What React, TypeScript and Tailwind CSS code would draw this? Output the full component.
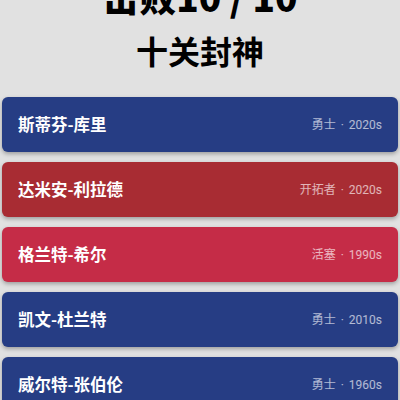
import React from "react";

const players = [
  { name: "斯蒂芬-库里", team: "勇士", era: "2020s", bg: "bg-[#263d84]" },
  { name: "达米安-利拉德", team: "开拓者", era: "2020s", bg: "bg-[#a82c33]" },
  { name: "格兰特-希尔", team: "活塞", era: "1990s", bg: "bg-[#c52c47]" },
  { name: "凯文-杜兰特", team: "勇士", era: "2010s", bg: "bg-[#263d84]" },
  { name: "威尔特-张伯伦", team: "勇士", era: "1960s", bg: "bg-[#263d84]" },
];

export default function App() {
  return (
    <div
      className="bg-[#e1e1e1] px-[2px] overflow-hidden h-[400px]"
      style={{ fontFamily: '"Noto Sans CJK SC", "Noto Sans", sans-serif' }}
    >
      <div className="text-center text-black mt-[-24px]">
        <div className="text-[37px] leading-[40px] font-black">击败10 / 10</div>
        <div className="text-[32px] leading-[40px] font-bold mt-[14px]">十关封神</div>
      </div>
      <div className="flex flex-col gap-[10px] mt-[27px]">
        {players.map((p) => (
          <div
            key={p.name}
            className={`${p.bg} h-[55px] rounded-md shadow-[0_2px_4px_rgba(0,0,0,0.3)] flex items-center justify-between pl-4 pr-4`}
          >
            <span className="text-white text-[16.5px] font-bold">{p.name}</span>
            <span
              className="text-white/65 text-[12px] flex items-center"
              style={{ fontFamily: 'Roboto, "Noto Sans CJK SC", sans-serif' }}
            >
              <span>{p.team}</span>
              <span className="mx-[5px]">·</span>
              <span>{p.era}</span>
            </span>
          </div>
        ))}
      </div>
    </div>
  );
}
